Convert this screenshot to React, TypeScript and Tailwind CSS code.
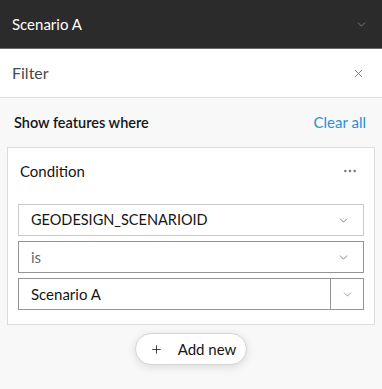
import { ChevronDown, X, MoreHorizontal, Plus } from "lucide-react";

const font = { fontFamily: "Lato, 'Open Sans', sans-serif" };

function Select({
  label,
  muted,
  border,
  split,
  size = "text-[15px]",
}: {
  label: string;
  muted?: boolean;
  border: string;
  split?: boolean;
  size?: string;
}) {
  return (
    <div className={`flex h-[32px] items-stretch border bg-white ${border}`}>
      <div
        className={`flex flex-1 items-center pl-[12px] ${size} ${
          muted ? "text-[#6a6a6a]" : "text-[#151515]"
        }`}
      >
        {label}
      </div>
      {split ? (
        <div className="flex w-[33px] items-center justify-center border-l border-[#959595]">
          <ChevronDown className="h-[13px] w-[13px] text-[#8a8a8a]" strokeWidth={1.5} />
        </div>
      ) : (
        <div className="flex w-[40px] items-center justify-center">
          <ChevronDown className="h-[13px] w-[13px] text-[#6a6a6a]" strokeWidth={1.5} />
        </div>
      )}
    </div>
  );
}

export default function App() {
  return (
    <div className="h-[389px] w-[382px] overflow-hidden bg-[#f8f8f8]" style={font}>
      {/* Scenario header */}
      <div className="flex h-[49px] items-center justify-between border-b border-[#6b6b6b] bg-[#2b2b2b] pl-[12px] pr-[14px]">
        <span className="text-[15px] text-white">Scenario A</span>
        <ChevronDown className="h-[13px] w-[13px] text-[#8a8a8a]" strokeWidth={1.5} />
      </div>

      {/* Filter title */}
      <div className="flex h-[49px] items-center justify-between border-b border-[#dfdfdf] bg-white pl-[12px] pr-[17px]">
        <span className="text-[16px] text-[#4a4a4a]">Filter</span>
        <X className="h-[13px] w-[13px] text-[#6a6a6a]" strokeWidth={1.5} />
      </div>

      {/* Body */}
      <div className="flex h-[49px] items-center justify-between pl-[14px] pr-[16px]">
        <span className="text-[14.5px] font-semibold text-[#151515]">Show features where</span>
        <span className="text-[15px] text-[#2b8fd6]">Clear all</span>
      </div>

      <div className="mx-[7px] border border-[#dcdcdc] bg-white px-[10px] pb-[14px]">
        <div className="flex h-[46px] items-center justify-between pl-[2px] pr-[6px]">
          <span className="text-[15px] text-[#151515]">Condition</span>
          <MoreHorizontal className="h-[16px] w-[16px] text-[#777]" strokeWidth={1.75} />
        </div>
        <div className="mt-[10px] flex flex-col gap-[5px]">
          <Select label="GEODESIGN_SCENARIOID" border="border-[#cacaca]" size="text-[14.5px]" />
          <Select label="is" muted border="border-[#959595]" />
          <Select label="Scenario A" border="border-[#959595]" split />
        </div>
      </div>

      <div className="mt-[8px] flex justify-center">
        <button className="flex h-[32px] items-center gap-[15px] rounded-full border border-[#d4d4d4] bg-white pl-[14px] pr-[10px] text-[15px] text-[#151515] shadow-[0_2px_8px_rgba(0,0,0,0.12)]">
          <Plus className="h-[13px] w-[13px]" strokeWidth={1.5} />
          Add new
        </button>
      </div>
    </div>
  );
}
